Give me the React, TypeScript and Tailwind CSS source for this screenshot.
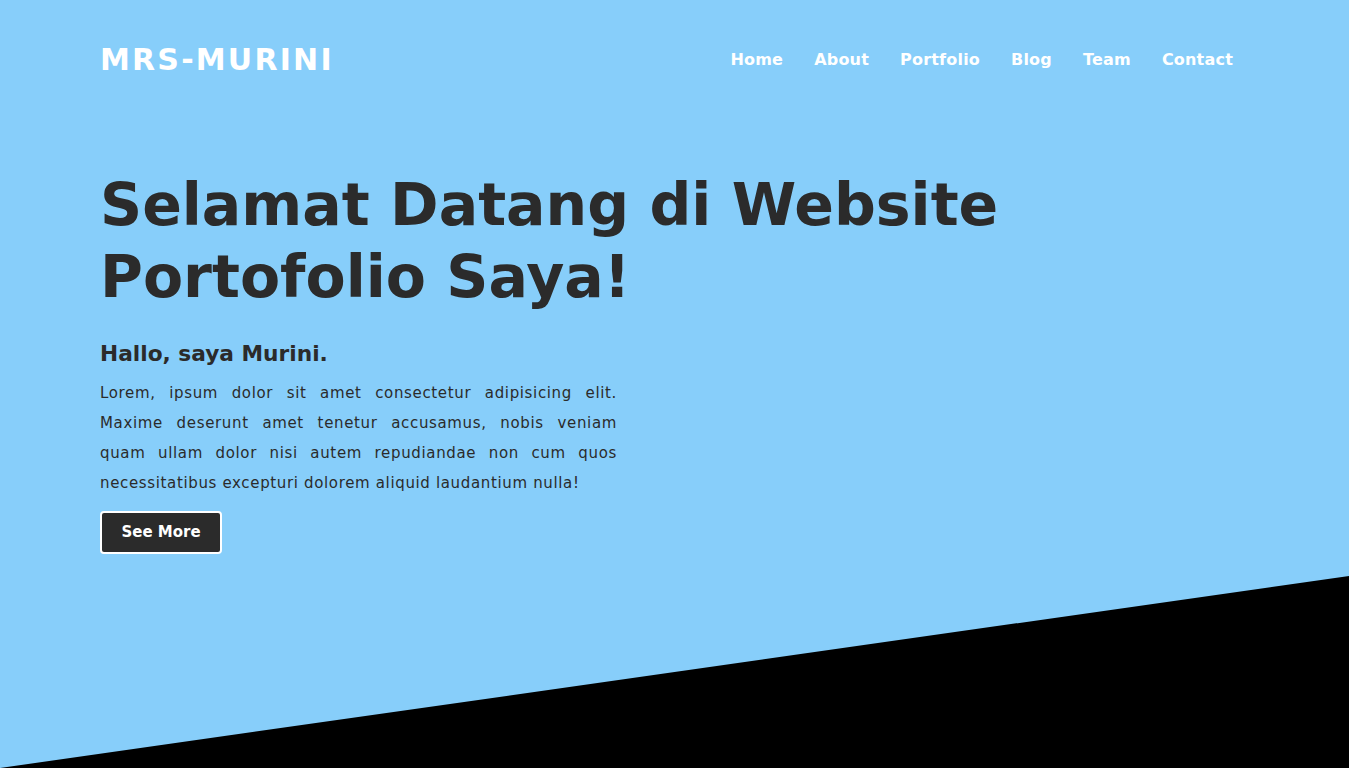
export default function App() {
  const font = { fontFamily: '"DejaVu Sans", "Liberation Sans", sans-serif' };
  return (
    <div className="relative w-full h-[768px] overflow-hidden bg-[#87cefa]" style={font}>
      <div className="absolute inset-0 bg-black [clip-path:polygon(0_100%,100%_75%,100%_100%)]" />
      <div className="relative pl-[100px] pr-[116px]">
        <header className="flex items-center justify-between h-[120px]">
          <div className="text-white font-bold text-[30px] tracking-[2.2px] leading-none">MRS-MURINI</div>
          <nav className="flex items-center gap-[31px] text-white font-bold text-[16px] tracking-[0.2px]">
            <a>Home</a>
            <a>About</a>
            <a>Portfolio</a>
            <a>Blog</a>
            <a>Team</a>
            <a>Contact</a>
          </nav>
        </header>
        <section className="pt-[49px]">
          <h1 className="text-[#2b2b2b] font-bold text-[58.5px] leading-[72px] w-[920px]">
            Selamat Datang di Website Portofolio Saya!
          </h1>
          <h3 className="mt-[26px] text-[#2b2b2b] font-bold text-[21.7px] leading-[30px]">Hallo, saya Murini.</h3>
          <p className="mt-[9px] w-[517px] text-justify text-[#2b2b2b] text-[15px] leading-[30px] tracking-[0.65px]">
            Lorem, ipsum dolor sit amet consectetur adipisicing elit. Maxime deserunt amet tenetur accusamus, nobis veniam quam ullam dolor nisi autem repudiandae non cum quos necessitatibus excepturi dolorem aliquid laudantium nulla!
          </p>
          <button className="mt-[13px] w-[122px] h-[43px] bg-[#2b2b2b] border-2 border-white rounded-[4px] text-white font-bold text-[15px]">
            See More
          </button>
        </section>
      </div>
    </div>
  );
}
